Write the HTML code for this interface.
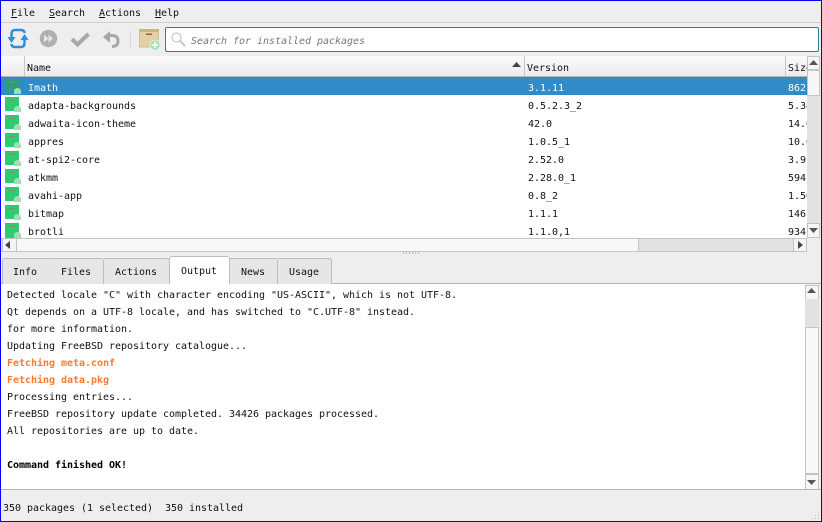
<!DOCTYPE html>
<html><head><meta charset="utf-8"><style>
html,body{margin:0;padding:0;background:#eeeeee}
#w{position:relative;width:822px;height:522px;overflow:hidden;background:#eeeeee;font:10px/14px "DejaVu Sans Mono","Liberation Mono",monospace;letter-spacing:-0.02px;color:#111}
.a{position:absolute;white-space:pre}
.b{position:absolute}
u{text-decoration:underline}
.ic{position:absolute;left:5px;width:14px;height:14px;background:#2ecc71;box-shadow:inset 0 1px 0 #45b878;overflow:visible}
.ic:before{content:"";position:absolute;left:4px;top:3px;width:6px;height:1px;background:#6f9a5c}
.ic:after{content:"";position:absolute;left:9px;top:9px;width:7px;height:6px;border-radius:50% 50% 0 0;background:#a6dcb4}
</style></head><body><div id="w">
<div class="a" style="left:11px;top:7px"><u>F</u>ile</div>
<div class="a" style="left:49px;top:7px"><u>S</u>earch</div>
<div class="a" style="left:99px;top:7px"><u>A</u>ctions</div>
<div class="a" style="left:155px;top:7px"><u>H</u>elp</div>
<div class="b" style="left:1px;top:22px;width:820px;height:1px;background:#cfcfcf"></div>
<svg class="b" style="left:0;top:24px" width="165" height="32" viewBox="0 0 165 32" fill="none">
<path d="M24.500 9Q24.500 6 21 6H15Q11.500 6 11.500 10V14" stroke="#2f8fdc" stroke-width="2.500"/>
<path d="M7.500 13h8l-4 6z" fill="#2f8fdc"/>
<path d="M11.500 20Q11.500 23 15 23H21Q24.500 23 24.500 19V15" stroke="#2f8fdc" stroke-width="2.500"/>
<path d="M20.500 16h8l-4 -6z" fill="#2f8fdc"/>
<circle cx="48.500" cy="14.500" r="8.700" fill="#b0b0b0"/>
<path d="M44 10.500l4.500 4-4.500 4zM48.500 10.500l4.500 4-4.500 4z" fill="#e6e6e6"/>
<path d="M72 15l5.500 5.500L88.500 10" stroke="#a8a8a8" stroke-width="4"/>
<path d="M103 13l7-6v12z" fill="#a8a8a8"/>
<path d="M109 11.500h3q6 0 6 5.500t-6 5.500" stroke="#a8a8a8" stroke-width="3"/>
<rect x="130" y="7" width="1" height="17" fill="#d4d4d4"/>
<rect x="139.500" y="5.500" width="19" height="17.500" fill="#e2d0a6" stroke="#d0c098"/>
<rect x="139" y="5" width="20" height="3" fill="#c9b48a"/>
<rect x="146" y="9.500" width="6" height="1.500" fill="#a8553f"/>
<circle cx="155" cy="21" r="5" fill="#a8deb0" stroke="#dff2e0"/>
<path d="M152 21h6M155 18v6" stroke="#fff" stroke-width="1.500"/>
</svg>
<div class="b" style="left:165px;top:27px;width:652px;height:23px;background:#fff;border:1px solid #2f7ca6;border-radius:2px"></div>
<svg class="b" style="left:170px;top:31px" width="16" height="16" fill="none"><circle cx="6.500" cy="6.500" r="4.500" stroke="#c8c8c8" stroke-width="1.200"/><path d="M10 10l5 5" stroke="#c8c8c8" stroke-width="2"/></svg>
<div class="a" style="left:191px;top:35px;font-style:italic;color:#777">Search for installed packages</div>

<div class="b" style="left:1px;top:56px;width:806px;height:20px;background:linear-gradient(#fafafa,#ececec);border-bottom:1px solid #b5b5b5"></div>
<div class="b" style="left:24px;top:56px;width:1px;height:20px;background:#c8c8c8"></div>
<div class="b" style="left:524px;top:56px;width:1px;height:20px;background:#c8c8c8"></div>
<div class="b" style="left:785px;top:56px;width:1px;height:20px;background:#c8c8c8"></div>
<div class="a" style="left:27px;top:62px">Name</div>
<div class="a" style="left:527px;top:62px">Version</div>
<div class="a" style="left:788px;top:62px">Size</div>
<svg class="b" style="left:512px;top:62px" width="9" height="6"><path d="M0 5L4.500 0 9 5z" fill="#444"/></svg>

<div class="b" style="left:1px;top:77px;width:806px;height:161px;background:#fff;overflow:hidden"></div>
<div class="b" style="left:1px;top:77px;width:806px;height:18px;background:#2f8cc8"></div>
<div class="ic" style="top:79px;background:#2b9d85;box-shadow:none"></div>
<div class="ic" style="top:97px"></div>
<div class="ic" style="top:115px"></div>
<div class="ic" style="top:133px"></div>
<div class="ic" style="top:151px"></div>
<div class="ic" style="top:169px"></div>
<div class="ic" style="top:187px"></div>
<div class="ic" style="top:205px"></div>
<div class="ic" style="top:223px;height:15px"></div>

<div class="a" style="left:28px;top:82px;color:#fff">Imath</div><div class="a" style="left:528px;top:82px;color:#fff">3.1.11</div><div class="a" style="left:788px;top:82px;color:#fff">862</div>
<div class="a" style="left:28px;top:100px">adapta-backgrounds</div><div class="a" style="left:528px;top:100px">0.5.2.3_2</div><div class="a" style="left:788px;top:100px">5.34</div>
<div class="a" style="left:28px;top:118px">adwaita-icon-theme</div><div class="a" style="left:528px;top:118px">42.0</div><div class="a" style="left:788px;top:118px">14.0</div>
<div class="a" style="left:28px;top:136px">appres</div><div class="a" style="left:528px;top:136px">1.0.5_1</div><div class="a" style="left:788px;top:136px">10.0</div>
<div class="a" style="left:28px;top:154px">at-spi2-core</div><div class="a" style="left:528px;top:154px">2.52.0</div><div class="a" style="left:788px;top:154px">3.91</div>
<div class="a" style="left:28px;top:172px">atkmm</div><div class="a" style="left:528px;top:172px">2.28.0_1</div><div class="a" style="left:788px;top:172px">594</div>
<div class="a" style="left:28px;top:190px">avahi-app</div><div class="a" style="left:528px;top:190px">0.8_2</div><div class="a" style="left:788px;top:190px">1.50</div>
<div class="a" style="left:28px;top:208px">bitmap</div><div class="a" style="left:528px;top:208px">1.1.1</div><div class="a" style="left:788px;top:208px">146</div>
<div class="a" style="left:28px;top:226px;height:12px;overflow:hidden">brotli</div><div class="a" style="left:528px;top:226px;height:12px;overflow:hidden">1.1.0,1</div><div class="a" style="left:788px;top:226px;height:12px;overflow:hidden">934</div>

<!-- table v-scroll -->
<div class="b" style="left:807px;top:56px;width:13px;height:182px;background:#e2e2e2"></div>
<div class="b" style="left:807px;top:56px;width:11px;height:12px;background:#f6f6f6;border:1px solid #c4c4c4"></div>
<div class="b" style="left:807px;top:70px;width:11px;height:24px;background:#f6f6f6;border:1px solid #c4c4c4"></div>
<div class="b" style="left:807px;top:223px;width:11px;height:13px;background:#f6f6f6;border:1px solid #c4c4c4"></div>
<svg class="b" style="left:809px;top:60px" width="9" height="5"><path d="M0 5L4.500 0 9 5z" fill="#555"/></svg>
<svg class="b" style="left:809px;top:228px" width="9" height="5"><path d="M0 0L4.500 5 9 0z" fill="#555"/></svg>

<!-- table h-scroll -->
<div class="b" style="left:1px;top:238px;width:806px;height:14px;background:#e2e2e2;box-sizing:border-box;border-top:1px solid #c4c4c4;border-bottom:1px solid #c4c4c4"></div>
<div class="b" style="left:2px;top:238px;width:13px;height:12px;background:#f4f4f4;border:1px solid #c4c4c4"></div>
<div class="b" style="left:16px;top:238px;width:621px;height:12px;background:#f8f8f8;border:1px solid #c4c4c4"></div>
<div class="b" style="left:793px;top:238px;width:12px;height:12px;background:#f4f4f4;border:1px solid #c4c4c4"></div>
<svg class="b" style="left:5px;top:241px" width="5" height="8"><path d="M5 0L0 4 5 8z" fill="#444"/></svg>
<svg class="b" style="left:798px;top:241px" width="5" height="8"><path d="M0 0L5 4 0 8z" fill="#444"/></svg>
<div class="a" style="left:403px;top:252px;width:17px;height:2px;background:repeating-linear-gradient(90deg,#bbb 0 1px,transparent 1px 3px)"></div>

<!-- tabs -->
<div class="b" style="left:1px;top:283px;width:820px;height:1px;background:#b5b5b5"></div>
<div class="b" style="left:2px;top:258px;width:47px;height:25px;background:#e6e6e6;border:1px solid #bdbdbd;border-bottom:0;border-radius:3px 3px 0 0"></div>
<div class="b" style="left:50px;top:258px;width:53px;height:25px;background:#e6e6e6;border:1px solid #bdbdbd;border-bottom:0;border-left:0;border-radius:0 3px 0 0"></div>
<div class="b" style="left:104px;top:258px;width:65px;height:25px;background:#e6e6e6;border:1px solid #bdbdbd;border-bottom:0;border-left:0;border-radius:0 3px 0 0"></div>
<div class="b" style="left:230px;top:258px;width:47px;height:25px;background:#e6e6e6;border:1px solid #bdbdbd;border-bottom:0;border-left:0;border-radius:0 3px 0 0"></div>
<div class="b" style="left:278px;top:258px;width:53px;height:25px;background:#e6e6e6;border:1px solid #bdbdbd;border-bottom:0;border-left:0;border-radius:0 3px 0 0"></div>
<div class="b" style="left:169px;top:256px;width:59px;height:28px;background:#fff;border:1px solid #bdbdbd;border-bottom:0;border-radius:3px 3px 0 0"></div>
<div class="a" style="left:13px;top:266px">Info</div>
<div class="a" style="left:61px;top:266px">Files</div>
<div class="a" style="left:115px;top:266px">Actions</div>
<div class="a" style="left:181px;top:265px">Output</div>
<div class="a" style="left:241px;top:266px">News</div>
<div class="a" style="left:289px;top:266px">Usage</div>

<!-- output -->
<div class="b" style="left:1px;top:284px;width:804px;height:205px;background:#fff"></div>
<div class="a" style="left:7px;top:289px">Detected locale "C" with character encoding "US-ASCII", which is not UTF-8.</div>
<div class="a" style="left:7px;top:306px">Qt depends on a UTF-8 locale, and has switched to "C.UTF-8" instead.</div>
<div class="a" style="left:7px;top:323px">for more information.</div>
<div class="a" style="left:7px;top:340px">Updating FreeBSD repository catalogue...</div>
<div class="a" style="left:7px;top:357px;color:#ff7a30;font-weight:bold">Fetching meta.conf</div>
<div class="a" style="left:7px;top:374px;color:#ff7a30;font-weight:bold">Fetching data.pkg</div>
<div class="a" style="left:7px;top:391px">Processing entries...</div>
<div class="a" style="left:7px;top:408px">FreeBSD repository update completed. 34426 packages processed.</div>
<div class="a" style="left:7px;top:425px">All repositories are up to date.</div>
<div class="a" style="left:7px;top:459px;font-weight:bold;color:#000">Command finished OK!</div>

<!-- output v-scroll -->
<div class="b" style="left:805px;top:284px;width:16px;height:205px;background:#eeeeee"></div>
<div class="b" style="left:805px;top:285px;width:12px;height:13px;background:#f6f6f6;border:1px solid #c4c4c4"></div>
<div class="b" style="left:805px;top:299px;width:14px;height:28px;background:#e2e2e2"></div>
<div class="b" style="left:805px;top:327px;width:12px;height:145px;background:#f8f8f8;border:1px solid #c4c4c4"></div>
<div class="b" style="left:805px;top:474px;width:12px;height:14px;background:#f6f6f6;border:1px solid #c4c4c4"></div>
<svg class="b" style="left:807px;top:288px" width="9" height="5"><path d="M0 5L4.500 0 9 5z" fill="#555"/></svg>
<svg class="b" style="left:807px;top:480px" width="9" height="5"><path d="M0 0L4.500 5 9 0z" fill="#555"/></svg>

<div class="b" style="left:1px;top:489px;width:820px;height:1px;background:#b5b5b5"></div>
<div class="a" style="left:3px;top:502px">350 packages (1 selected)  350 installed</div>
<div class="b" style="left:808px;top:508px;width:13px;height:13px;background:radial-gradient(#bbb 0.500px,transparent 0.800px) 0 0/3px 3px;clip-path:polygon(100% 0,100% 100%,0 100%)"></div>

<!-- blue frame -->
<div class="b" style="left:0;top:0;width:820px;height:520px;border:1px solid #0000ee"></div>
</div></body></html>
